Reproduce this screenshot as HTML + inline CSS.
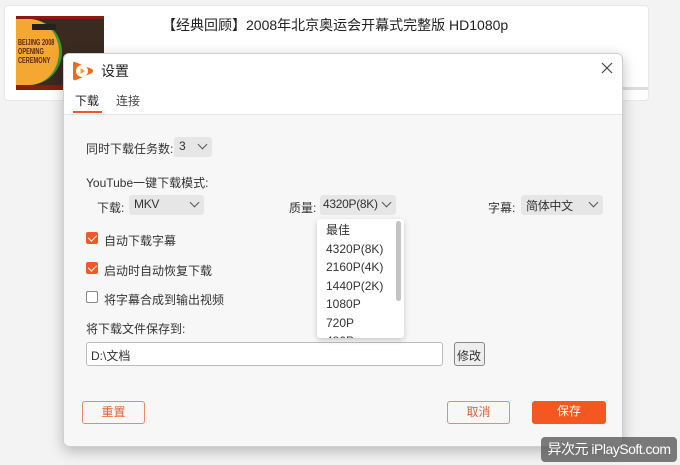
<!DOCTYPE html>
<html><head><meta charset="utf-8"><style>
*{margin:0;padding:0;box-sizing:border-box}
body{width:680px;height:465px;background:#f3f3f3;position:relative;overflow:hidden;font-family:"Liberation Sans","Noto Sans CJK SC",sans-serif;color:#333}
.a{position:absolute}
.card{left:4px;top:5px;width:645px;height:96px;background:#fff;border-radius:4px;border:1px solid #e8e8e8}
.thumb{left:16px;top:16px;width:88px;height:74px;background:#8b1a10}
.dlg{left:63px;top:53px;width:560px;height:394px;background:#f7f7f7;border:1px solid #cfcfcf;border-radius:6px;box-shadow:0 4px 14px rgba(0,0,0,.25);overflow:hidden}
.hd{left:0;top:0;width:560px;height:61px;background:#fff;border-bottom:1px solid #e6e6e6}
.t{font-size:12px;white-space:nowrap}
.sel{background:#e6e6e6;border-radius:3px;height:20px;font-size:12px;padding:2px 5px;color:#333;white-space:nowrap;letter-spacing:-.3px}
.chev{position:absolute;right:6px;top:4px;width:7px;height:7px;border-right:1.3px solid #555;border-bottom:1.3px solid #555;transform:rotate(45deg)}
.cb{width:12px;height:12px;border-radius:2px;background:#f05a28}
.cb::after{content:"";position:absolute;left:3.5px;top:1px;width:3.5px;height:7px;border-right:1.5px solid #fff;border-bottom:1.5px solid #fff;transform:rotate(45deg)}
.btn{height:23px;border-radius:3px;font-size:12px;text-align:center;line-height:21px}
</style></head><body>
<div class="a card"></div>
<div class="a thumb">
 <div class="a" style="left:0;top:3px;width:88px;height:66px;background:#3a2a20"></div>
 <div class="a" style="left:0;top:3px;width:46px;height:66px;background:#f4a832;border-right:3px solid #3a9a3a;border-radius:0 40px 40px 0"></div>
 <div class="a" style="left:2px;top:22px;font-size:8px;line-height:9px;color:#5a2a10;font-weight:bold;transform:scaleX(.7);transform-origin:left">BEIJING 2008<br>OPENING<br>CEREMONY</div>
 <div class="a" style="left:16px;top:8px;width:24px;height:6px;background:#222"></div>
</div>
<div class="a t" style="left:162px;top:15px;font-size:14px;color:#222">【经典回顾】2008年北京奥运会开幕式完整版 HD1080p</div>
<div class="a" style="left:560px;top:87px;width:88px;height:3px;background:#ddd"></div>

<div class="a dlg">
 <div class="a hd">
  <svg class="a" style="left:7px;top:5px" width="24" height="24" viewBox="0 0 24 24"><path d="M4 3 Q2 2 2 5 L2 19 Q2 22 5 21 L21 14 Q23 12 21 10 Z" fill="#f06a1a"/><circle cx="11" cy="12" r="6" fill="#fff"/><path d="M9.5 9 L14 12 L9.5 15 Z" fill="#f6a21a"/></svg>
  <div class="a" style="left:37px;top:7px;font-size:14px;color:#222">设置</div>
  <svg class="a" style="left:537px;top:8px" width="12" height="12" viewBox="0 0 12 12"><path d="M1 1L11 11M11 1L1 11" stroke="#444" stroke-width="1.2"/></svg>
  <div class="a t" style="left:11px;top:38px;color:#222">下载</div>
  <div class="a t" style="left:52px;top:38px;color:#444">连接</div>
  <div class="a" style="left:9px;top:57px;width:29px;height:2px;background:#f05a28"></div>
 </div>
 <div class="a t" style="left:22px;top:86px">同时下载任务数:</div>
 <div class="a sel" style="left:110px;top:83px;width:38px">3<span class="chev"></span></div>
 <div class="a t" style="left:22px;top:120px">YouTube一键下载模式:</div>
 <div class="a t" style="left:33px;top:145px">下载:</div>
 <div class="a sel" style="left:65px;top:141px;width:75px">MKV<span class="chev"></span></div>
 <div class="a t" style="left:225px;top:145px">质量:</div>
 <div class="a sel" style="left:256px;top:141px;width:76px;padding-left:3px">4320P(8K)<span class="chev"></span></div>
 <div class="a t" style="left:424px;top:145px">字幕:</div>
 <div class="a sel" style="left:457px;top:141px;width:82px">简体中文<span class="chev"></span></div>
 <div class="a cb" style="left:22px;top:178px"></div>
 <div class="a t" style="left:40px;top:178px">自动下载字幕</div>
 <div class="a cb" style="left:22px;top:208px"></div>
 <div class="a t" style="left:40px;top:208px">启动时自动恢复下载</div>
 <div class="a" style="left:22px;top:237px;width:12px;height:12px;border:1px solid #888;border-radius:2px;background:#fff"></div>
 <div class="a t" style="left:40px;top:237px">将字幕合成到输出视频</div>
 <div class="a t" style="left:22px;top:266px">将下载文件保存到:</div>
 <div class="a" style="left:22px;top:288px;width:357px;height:24px;background:#fff;border:1px solid #bbb;border-radius:3px;font-size:12px;padding:4px 4px">D:\文档</div>
 <div class="a" style="left:390px;top:288px;width:31px;height:24px;background:#eee;border:1px solid #888;border-radius:3px;font-size:12px;padding:4px 2px">修改</div>
 <div class="a" style="left:253px;top:165px;width:87px;height:119px;background:#fff;box-shadow:0 2px 6px rgba(0,0,0,.2);border-radius:3px;overflow:hidden">
  <div style="font-size:12px;line-height:18.5px;padding:2px 0 0 9px">最佳<br>4320P(8K)<br>2160P(4K)<br>1440P(2K)<br>1080P<br>720P<br>480P</div>
  <div class="a" style="left:79px;top:2px;width:5px;height:80px;background:#c4c4c4;border-radius:3px"></div>
 </div>
 <div class="a btn" style="left:18px;top:347px;width:63px;border:1px solid #e88a6c;color:#e0603a">重置</div>
 <div class="a btn" style="left:383px;top:347px;width:63px;border:1px solid #e88a6c;color:#e0603a">取消</div>
 <div class="a btn" style="left:468px;top:347px;width:74px;background:#f4571f;color:#fff">保存</div>
</div>
<div class="a" style="left:541px;top:437px;width:136px;height:25px;background:rgba(80,80,80,.75);border-radius:4px;color:#fff;font-size:14px;line-height:25px;text-align:center;letter-spacing:-.5px">异次元 iPlaySoft.com</div>
</body></html>
